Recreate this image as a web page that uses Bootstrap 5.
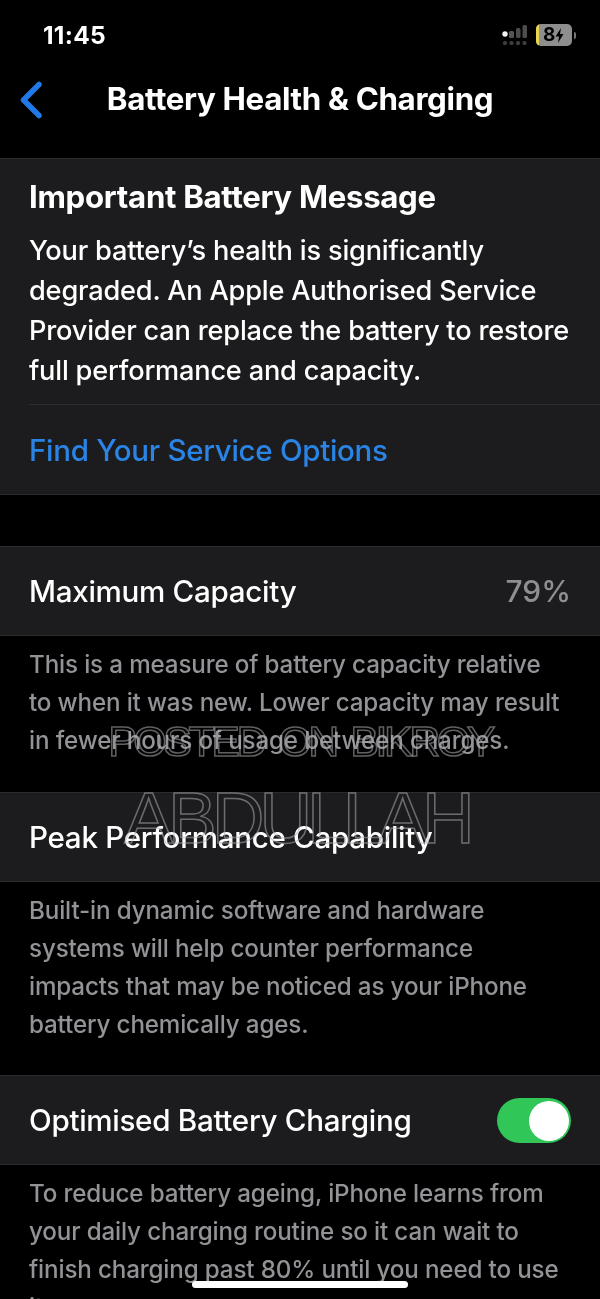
<!DOCTYPE html>
<html lang="en">
<head>
  <meta charset="UTF-8">
  <title>Battery Health &amp; Charging</title>
  <link href="https://cdn.jsdelivr.net/npm/bootstrap@5.3.0/dist/css/bootstrap.min.css" rel="stylesheet">
  <style>
    html, body { height: 1299px; overflow: hidden; }
    body { background: #000; color: #fff; font-family: Inter, "Liberation Sans", sans-serif; }
    .phone { position: relative; width: 600px; height: 1299px; overflow: hidden; filter: blur(.45px); }
    .status-bar { height: 70px; padding: 0 24px 0 43px; }
    .clock { font-size: 24.5px; font-weight: 700; letter-spacing: .3px; }
    .top-nav { position: relative; height: 88px; padding-bottom: 28px; }
    .nav-back { position: absolute; left: 19px; top: 11px; }
    .nav-title { font-size: 31.3px; font-weight: 700; letter-spacing: -.35px; margin: 0; }
    .panel { background: #1c1c1e; border-top: 1px solid #2b2b2d; border-bottom: 1px solid #2b2b2d; }
    .msg-panel { height: 337px; padding: 0 0 0 29px; }
    .msg-head { font-size: 31.2px; font-weight: 700; letter-spacing: -.3px; line-height: 40px; padding-top: 18px; margin: 0; }
    .msg-body { font-size: 27.2px; font-weight: 450; line-height: 40px; letter-spacing: -.2px; margin: 0; height: 188px; padding-top: 14px; border-bottom: 1px solid #2e2e30; }
    .msg-link { font-size: 29.5px; font-weight: 500; line-height: 90px; letter-spacing: -.3px; color: #2a84e6; }
    .gap-band { height: 51px; }
    .row-panel { height: 90px; padding: 0 29px; font-size: 29.6px; font-weight: 500; letter-spacing: -.3px; }
    .row-value { color: #8e8e93; font-size: 30px; font-weight: 500; letter-spacing: 0; }
    .foot-note { color: #939397; font-size: 24.2px; font-weight: 450; line-height: 38px; letter-spacing: -.15px; padding: 10px 0 0 29px; margin: 0; white-space: nowrap; }
    .note-a { height: 156px; }
    .note-b { height: 193px; }
    .ios-switch { width: 74px; height: 45px; border-radius: 23px; background: #30c758; position: relative; }
    .ios-knob { position: absolute; right: 2px; top: 3px; width: 40px; height: 40px; border-radius: 50%; background: #fff; }
    .mark-text { position: absolute; width: 600px; text-align: center; color: transparent; -webkit-text-stroke: 1.5px rgba(175,175,180,.55); font-family: "Liberation Sans", sans-serif; white-space: nowrap; }
    .mark-one { left: 0; top: 709px; font-size: 43px; letter-spacing: -3.5px; word-spacing: 6px; }
    .mark-two { left: -3px; top: 763px; font-size: 73px; letter-spacing: -5px; }
    .home-bar { position: absolute; left: 192px; top: 1281px; width: 216px; height: 7px; border-radius: 4px; background: #fff; }
    .batt { position: relative; width: 36px; height: 22px; border-radius: 5px; background: #8e8e8e; overflow: hidden; color: #000; font-size: 19px; font-weight: 700; line-height: 22px; padding-left: 7px; }
    .batt-fill { position: absolute; left: 0; top: 0; width: 3px; height: 22px; background: #e8d44d; }
    .batt-nub { width: 2px; height: 7px; background: #777; border-radius: 0 2px 2px 0; margin-left: 2px; }
  </style>
</head>
<body>
  <div class="phone">
    <!-- Status bar -->
    <div class="status-bar d-flex align-items-center justify-content-between">
      <span class="clock">11:45</span>
      <div class="d-flex align-items-center">
        <svg class="me-2" width="26" height="22" viewBox="0 0 26 22">
          <circle cx="3" cy="10" r="2.7" fill="#f2f2f2"/>
          <rect x="7" y="7" width="5" height="7" rx="1.5" fill="#555"/>
          <rect x="14" y="4" width="4.500" height="10" rx="1.500" fill="#4d4d4d"/>
          <rect x="20.500" y="1" width="4.500" height="13" rx="1.500" fill="#4d4d4d"/>
          <g fill="#3d3d3d"><rect x="1" y="17" width="4" height="4" rx="1.500"/><rect x="7.500" y="17" width="4" height="4" rx="1.500"/><rect x="14" y="17" width="4" height="4" rx="1.500"/><rect x="20.500" y="17" width="4" height="4" rx="1.500"/></g>
        </svg>
        <div class="batt">
          <span class="batt-fill"></span>8<svg width="9" height="15" viewBox="0 0 9 15"><path d="M6 0 0.500 8.500H4L3 15 8.500 6H5z" fill="#000"/></svg>
        </div>
        <span class="batt-nub"></span>
      </div>
    </div>

    <!-- Nav -->
    <div class="top-nav d-flex align-items-center justify-content-center">
      <svg class="nav-back" width="24" height="38" viewBox="0 0 24 38">
        <path d="M20 3.500 4.500 19 20 34.500" fill="none" stroke="#2079e6" stroke-width="5.500" stroke-linecap="round" stroke-linejoin="round"/>
      </svg>
      <h1 class="nav-title">Battery Health &amp; Charging</h1>
    </div>

    <!-- Message -->
    <div class="panel msg-panel">
      <p class="msg-head">Important Battery Message</p>
      <p class="msg-body">Your battery’s health is significantly<br>degraded. An Apple Authorised Service<br>Provider can replace the battery to restore<br>full performance and capacity.</p>
      <div class="msg-link">Find Your Service Options</div>
    </div>
    <div class="gap-band"></div>

    <div class="panel row-panel d-flex align-items-center justify-content-between">
      <span>Maximum Capacity</span>
      <span class="row-value">79%</span>
    </div>
    <p class="foot-note note-a">This is a measure of battery capacity relative<br>to when it was new. Lower capacity may result<br>in fewer hours of usage between charges.</p>

    <div class="panel row-panel d-flex align-items-center">
      <span>Peak Performance Capability</span>
    </div>
    <p class="foot-note note-b">Built-in dynamic software and hardware<br>systems will help counter performance<br>impacts that may be noticed as your iPhone<br>battery chemically ages.</p>

    <div class="panel row-panel d-flex align-items-center justify-content-between">
      <span>Optimised Battery Charging</span>
      <div class="ios-switch"><span class="ios-knob"></span></div>
    </div>
    <p class="foot-note">To reduce battery ageing, iPhone learns from<br>your daily charging routine so it can wait to<br>finish charging past 80% until you need to use<br>it.</p>

    <!-- Overlays -->
    <div class="mark-text mark-one">POSTED ON BIKROY</div>
    <div class="mark-text mark-two">ABDULLAH</div>
    <div class="home-bar"></div>
  </div>
</body>
</html>
